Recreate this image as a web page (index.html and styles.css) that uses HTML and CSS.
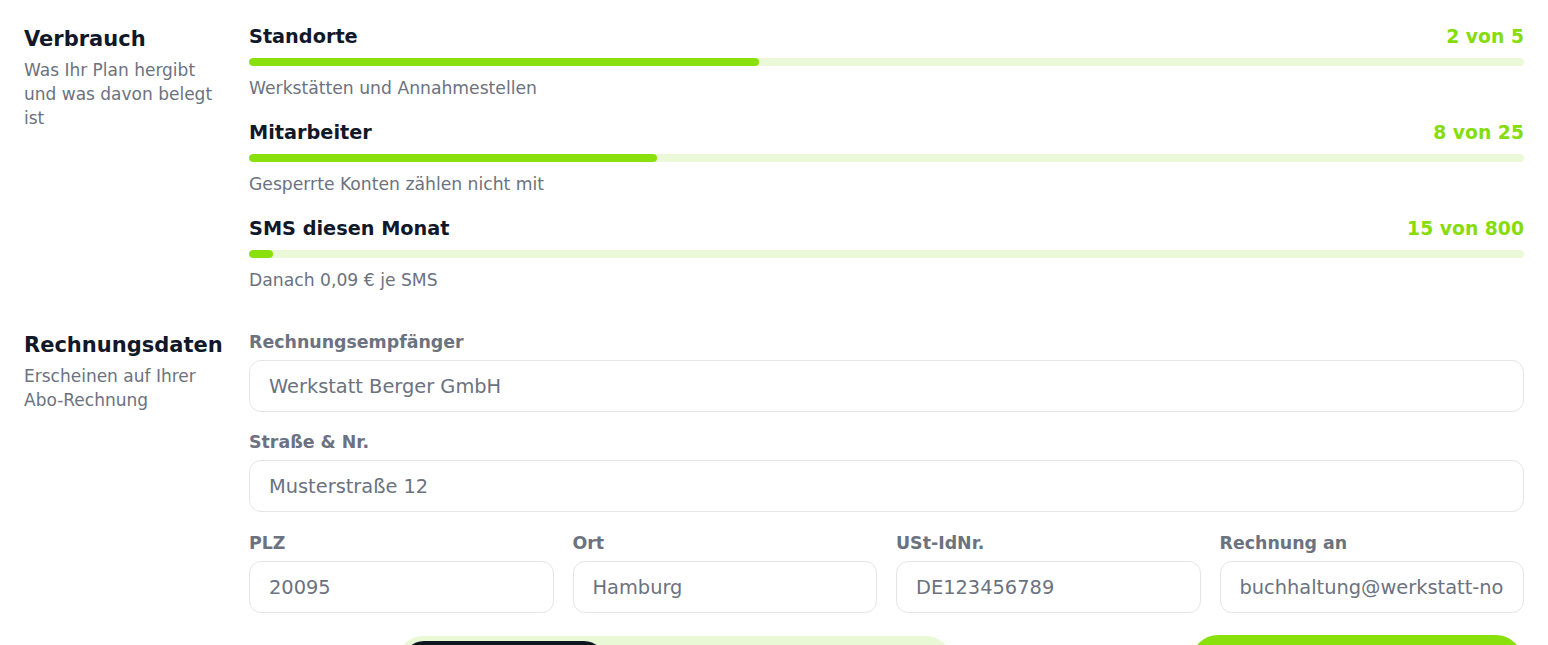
FILE: index.html
```html
<!DOCTYPE html>
<html lang="de">
<head>
<meta charset="utf-8">
<title>Abo</title>
<link rel="stylesheet" href="styles.css">
</head>
<body>
<div class="page">
  <section class="section">
    <div class="side">
      <h2 class="side-title">Verbrauch</h2>
      <p class="side-sub">Was Ihr Plan hergibt und was davon belegt ist</p>
    </div>
    <div class="main usage">
      <div class="item">
        <div class="item-head"><span class="item-title">Standorte</span><span class="item-count">2 von 5</span></div>
        <div class="track"><div class="fill" style="width:40%"></div></div>
        <div class="item-sub">Werkstätten und Annahmestellen</div>
      </div>
      <div class="item">
        <div class="item-head"><span class="item-title">Mitarbeiter</span><span class="item-count">8 von 25</span></div>
        <div class="track"><div class="fill" style="width:32%"></div></div>
        <div class="item-sub">Gesperrte Konten zählen nicht mit</div>
      </div>
      <div class="item">
        <div class="item-head"><span class="item-title">SMS diesen Monat</span><span class="item-count">15 von 800</span></div>
        <div class="track"><div class="fill" style="width:1.875%"></div></div>
        <div class="item-sub">Danach 0,09 € je SMS</div>
      </div>
    </div>
  </section>

  <section class="section">
    <div class="side">
      <h2 class="side-title">Rechnungsdaten</h2>
      <p class="side-sub">Erscheinen auf Ihrer Abo-Rechnung</p>
    </div>
    <div class="main form">
      <label class="field">
        <span class="label">Rechnungsempfänger</span>
        <input class="input" type="text" value="Werkstatt Berger GmbH">
      </label>
      <label class="field">
        <span class="label">Straße &amp; Nr.</span>
        <input class="input" type="text" value="Musterstraße 12">
      </label>
      <div class="grid4">
        <label class="field">
          <span class="label">PLZ</span>
          <input class="input" type="text" value="20095">
        </label>
        <label class="field">
          <span class="label">Ort</span>
          <input class="input" type="text" value="Hamburg">
        </label>
        <label class="field">
          <span class="label">USt-IdNr.</span>
          <input class="input" type="text" value="DE123456789">
        </label>
        <label class="field">
          <span class="label">Rechnung an</span>
          <input class="input" type="text" value="buchhaltung@werkstatt-nord.de">
        </label>
      </div>
      <div class="footer">
        <div class="segmented">
          <button class="seg seg-active" type="button">Monatlich</button>
          <button class="seg" type="button">Jährlich</button>
        </div>
        <button class="save" type="button">Speichern</button>
      </div>
    </div>
  </section>
</div>
</body>
</html>
```

FILE: styles.css
```css
* { box-sizing: border-box; }

html, body {
  margin: 0;
  padding: 0;
  background: #ffffff;
}

body {
  font-family: "DejaVu Sans", "Liberation Sans", sans-serif;
  color: #111827;
}

.page {
  padding: 24px 24px 40px 24px;
  display: flex;
  flex-direction: column;
  gap: 38px;
}

.section {
  display: flex;
  align-items: flex-start;
}

.side {
  width: 225px;
  flex: none;
  padding-right: 24px;
}

.side-title {
  margin: 0;
  font-size: 21px;
  line-height: 30px;
  font-weight: 700;
  color: #111827;
}

.side-sub {
  margin: 4px 0 0 0;
  font-size: 17px;
  line-height: 24px;
  color: #6b7280;
}

.main {
  flex: 1;
  min-width: 0;
}

.usage {
  display: flex;
  flex-direction: column;
  gap: 20px;
}

.item {
  display: flex;
  flex-direction: column;
  gap: 10px;
}

.item-head {
  display: flex;
  justify-content: space-between;
  align-items: baseline;
  line-height: 26px;
  margin-bottom: -2px;
}

.item-title {
  font-size: 19.3px;
  font-weight: 700;
  color: #111827;
}

.item-count {
  font-size: 18.8px;
  font-weight: 700;
  color: #86dc0c;
}

.track {
  height: 8px;
  border-radius: 4px;
  background: #ebf9d8;
  overflow: hidden;
}

.fill {
  height: 100%;
  border-radius: 4px;
  background: #8ae00c;
}

.item-sub {
  font-size: 17.2px;
  line-height: 24px;
  color: #6b7280;
}

.form {
  display: flex;
  flex-direction: column;
  gap: 18px;
}

.field {
  display: flex;
  flex-direction: column;
  gap: 6px;
  min-width: 0;
}

.label {
  font-size: 17.4px;
  line-height: 24px;
  font-weight: 700;
  color: #6b7280;
}

.input {
  width: 100%;
  height: 52px;
  border: 1px solid #e3e5e9;
  border-radius: 12px;
  padding: 0 19px;
  font-family: "DejaVu Sans", "Liberation Sans", sans-serif;
  font-size: 19.4px;
  color: #6b7280;
  background: #ffffff;
  outline: none;
}

.grid4 {
  margin-top: 1px;
  display: grid;
  grid-template-columns: repeat(4, 1fr);
  gap: 19px;
}

.footer {
  margin-top: 4px;
  display: flex;
  align-items: center;
  justify-content: space-between;
  padding-left: 148px;
}

.segmented {
  width: 555px;
  height: 52px;
  padding: 5px 6px;
  border-radius: 26px;
  background: #e9f9d6;
  display: flex;
  gap: 4px;
}

.seg {
  flex: none;
  width: 202px;
  border: none;
  border-radius: 21px;
  background: transparent;
  font-family: "DejaVu Sans", "Liberation Sans", sans-serif;
  font-size: 17px;
  line-height: 1;
  font-weight: 700;
  color: #4b5563;
}

.seg-active {
  background: #0f1722;
  color: #ffffff;
}

.save {
  width: 332px;
  height: 54px;
  margin-right: 1px;
  border: none;
  border-radius: 27px;
  background: #8ae00c;
  font-family: "DejaVu Sans", "Liberation Sans", sans-serif;
  font-size: 18px;
  line-height: 1;
  font-weight: 700;
  color: #111827;
}
```
